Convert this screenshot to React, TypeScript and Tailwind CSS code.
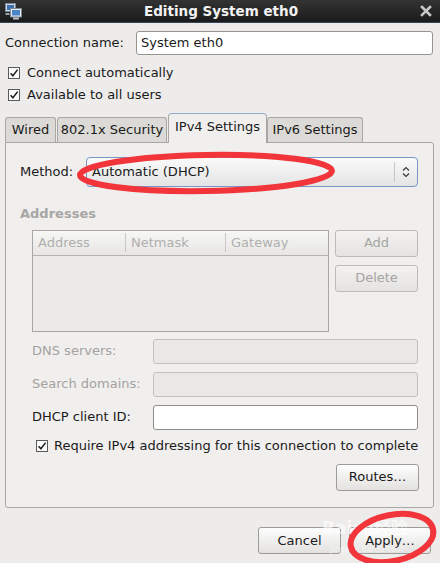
import React from "react";

const font = { fontFamily: '"DejaVu Sans", "Noto Sans CJK SC", sans-serif' };

function Check({ className = "" }: { className?: string }) {
  return (
    <svg width="12" height="12" viewBox="0 0 12 12" className={className}>
      <rect x="0.5" y="0.5" width="11" height="11" fill="#fbfbfb" stroke="#5a5a5a" />
      <path d="M2.6 6.2 L4.9 8.8 L9.6 2.6" fill="none" stroke="#1e1e1e" strokeWidth="1.5" />
    </svg>
  );
}

function Btn({ children, disabled = false, className = "" }: { children: React.ReactNode; disabled?: boolean; className?: string }) {
  return (
    <div
      className={`flex items-center justify-center rounded-[3px] border bg-gradient-to-b ${
        disabled
          ? "border-[#bdbbb7] from-[#f3f2f1] to-[#e4e3e1] text-[#a5a4a2]"
          : "border-[#9d9b97] from-[#fdfdfd] to-[#e3e2e0] text-[#1a1a1a]"
      } ${className}`}
    >
      {children}
    </div>
  );
}

function Field({ label, disabled = false, white = false }: { label: string; disabled?: boolean; white?: boolean }) {
  return (
    <div className="flex h-[25px] items-center">
      <span className={`w-[121px] ${disabled ? "text-[#a3a2a0]" : "text-[#1a1a1a]"}`}>{label}</span>
      <div
        className={`h-[25px] w-[265px] rounded-[3px] border ${
          white ? "border-[#8f8d89] bg-white" : "border-[#c2c0bc] bg-[#e9e8e6]"
        }`}
      />
    </div>
  );
}

export default function App() {
  return (
    <div className="relative h-[563px] w-[440px] overflow-hidden bg-[#edeceb] text-[13px] text-[#1a1a1a]" style={font}>
      {/* title bar */}
      <div className="flex h-[23px] items-center border-b border-[#35465e] bg-gradient-to-b from-[#333333] to-[#1b1b1b] px-[5px]">
        <svg width="17" height="17" viewBox="0 0 17 17">
          <rect x="0.5" y="0.5" width="10" height="8" fill="#cfd6df" stroke="#7b8794" />
          <rect x="2" y="2" width="7" height="5" fill="#3a6fb0" />
          <rect x="5.5" y="5.5" width="11" height="8.5" fill="#e8ecf0" stroke="#7b8794" />
          <rect x="7" y="7" width="8" height="5.5" fill="#4d86c8" />
          <rect x="8" y="14.5" width="6" height="2" fill="#b9c0c8" />
          <rect x="0.5" y="10" width="4" height="2" fill="#9aa2ab" />
        </svg>
        <div className="flex-1 text-center text-[13.5px] font-bold text-[#f2f2f2]">Editing System eth0</div>
        <svg width="12" height="12" viewBox="0 0 12 12" className="mr-[3px]">
          <path d="M2 2 L10 10 M10 2 L2 10" stroke="#c8c8c8" strokeWidth="2.6" strokeLinecap="square" />
        </svg>
      </div>

      <div className="px-[5px]">
        {/* connection name */}
        <div className="mt-[8px] flex h-[24px] items-center">
          <span className="w-[131px]">Connection name:</span>
          <div className="flex h-[24px] w-[297px] items-center rounded-[3px] border border-[#96948f] bg-white px-[4px]">
            System eth0
          </div>
        </div>

        <div className="mt-[7px] flex h-[22px] items-center pl-[3px]">
          <Check />
          <span className="ml-[7px]">Connect automatically</span>
        </div>
        <div className="flex h-[22px] items-center pl-[3px]">
          <Check />
          <span className="ml-[7px]">Available to all users</span>
        </div>

        {/* tabs */}
        <div className="mt-[7px] flex h-[29px] items-end">
          <div className="flex h-[25px] w-[51px] items-center justify-center rounded-t-[3px] border border-b-0 border-[#a9a7a3] bg-[#dcdad6]">Wired</div>
          <div className="ml-[1px] flex h-[25px] w-[110px] items-center justify-center rounded-t-[3px] border border-b-0 border-[#a9a7a3] bg-[#dcdad6]">802.1x Security</div>
          <div className="relative z-10 -mb-[1px] ml-[1px] flex h-[30px] w-[99px] items-center justify-center rounded-t-[4px] border border-b-0 border-[#a9a7a3] border-t-[#8fa9cf] bg-[#f0efee] pb-[3px]">IPv4 Settings</div>
          <div className="flex h-[25px] w-[96px] items-center justify-center rounded-t-[3px] border border-b-0 border-[#a9a7a3] bg-[#dcdad6]">IPv6 Settings</div>
        </div>

        {/* panel */}
        <div className="h-[366px] w-[429px] rounded-b-[3px] rounded-tr-[3px] border border-[#a9a7a3] bg-[#f0efee] pl-[14px]">
          <div className="mt-[14px] flex h-[30px] items-center">
            <span className="w-[66px]">Method:</span>
            <div className="flex h-[30px] w-[332px] items-center rounded-[4px] border border-[#7896c8] bg-gradient-to-b from-[#fafafa] to-[#e4e4e4] pl-[5px]">
              <span className="flex-1">Automatic (DHCP)</span>
              <div className="h-[20px] w-px bg-[#c8c6c3]" />
              <svg width="22" height="14" viewBox="0 0 22 14">
                <path d="M8 5.5 L11 2.5 L14 5.5 M8 8.5 L11 11.5 L14 8.5" fill="none" stroke="#3a3a3a" strokeWidth="1.2" />
              </svg>
            </div>
          </div>

          <div className="mt-[17px] font-bold text-[#a7a6a4]">Addresses</div>

          <div className="mt-[6px] flex pl-[12px]">
            <div className="h-[102px] w-[297px] border border-[#a9a7a3] bg-[#ebeae9]">
              <div className="flex h-[25px] items-center border-b border-[#b5b3af] bg-gradient-to-b from-[#f7f7f6] to-[#e7e6e4] text-[#b0afad]">
                <span className="w-[93px] border-r border-[#c9c7c4] pl-[5px]">Address</span>
                <span className="w-[100px] border-r border-[#c9c7c4] pl-[5px]">Netmask</span>
                <span className="pl-[5px]">Gateway</span>
              </div>
            </div>
            <div className="ml-[6px] flex flex-col gap-[8px]">
              <Btn disabled className="h-[27px] w-[83px]">Add</Btn>
              <Btn disabled className="h-[27px] w-[83px]">Delete</Btn>
            </div>
          </div>

          <div className="mt-[7px] flex flex-col gap-[8px] pl-[12px]">
            <Field label="DNS servers:" disabled />
            <Field label="Search domains:" disabled />
            <Field label="DHCP client ID:" white />
          </div>

          <div className="mt-[5px] flex h-[22px] items-center pl-[16px]">
            <Check />
            <span className="ml-[6px]">Require IPv4 addressing for this connection to complete</span>
          </div>

          <div className="mt-[7px] flex justify-end pr-[14px]">
            <Btn className="h-[27px] w-[83px]">Routes…</Btn>
          </div>
        </div>

        {/* bottom buttons */}
        <div className="mt-[19px] flex justify-end gap-[8px] pr-[4px]">
          <Btn className="h-[27px] w-[83px]">Cancel</Btn>
          <Btn className="h-[27px] w-[82px]">Apply…</Btn>
        </div>
      </div>

      {/* watermark */}
      <div className="pointer-events-none absolute left-[322px] top-[520px] text-[17px] font-bold leading-none text-white/60">Bai<span className="text-[15px]">du</span>经验</div>
      <div className="pointer-events-none absolute left-[330px] top-[546px] text-[8px] leading-none text-white/50">jingyan.baidu.com</div>

      {/* red annotation ellipses */}
      <svg className="pointer-events-none absolute left-0 top-0" width="440" height="563">
        <ellipse cx="206" cy="173" rx="126" ry="18" fill="none" stroke="#f2353a" strokeWidth="6" transform="rotate(-1 206 173)" />
        <ellipse cx="392" cy="538" rx="42" ry="23" fill="none" stroke="#f2353a" strokeWidth="6" transform="rotate(-12 392 538)" />
      </svg>
    </div>
  );
}
